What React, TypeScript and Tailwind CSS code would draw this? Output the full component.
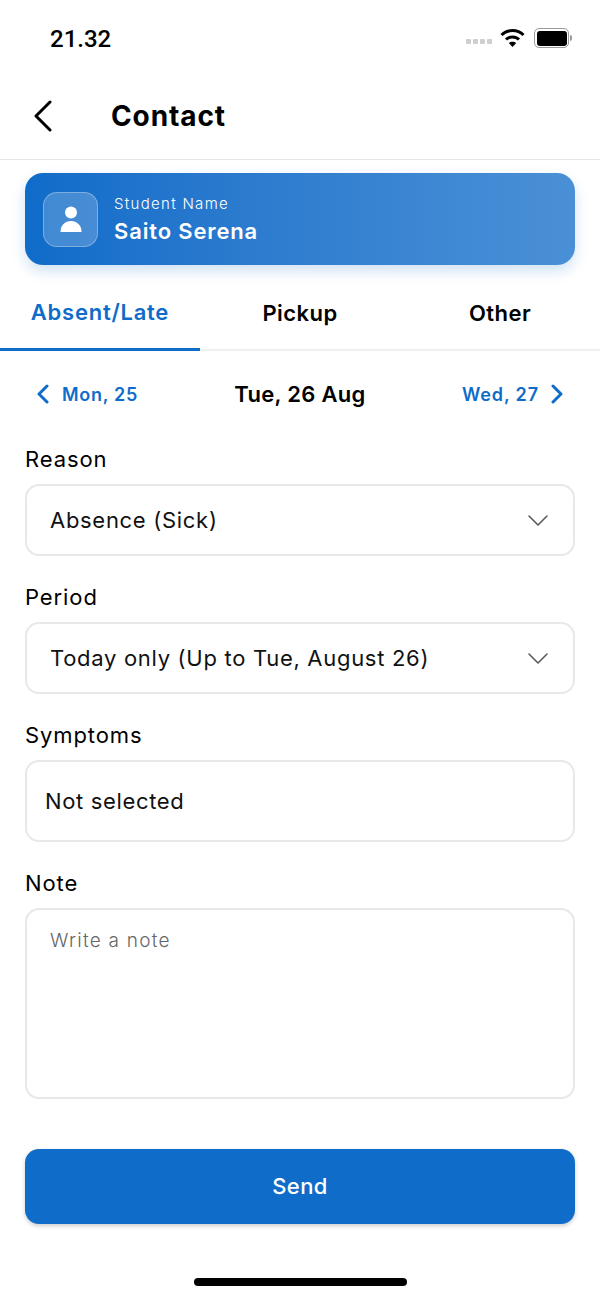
const tabs = ['Absent/Late', 'Pickup', 'Other']

function Field({ label, className, children }: { label: string; className: string; children: React.ReactNode }) {
  return (
    <div className={className}>
      <div className="h-[25px] text-[22px] leading-[25px] tracking-[0.9px] text-black">{label}</div>
      {children}
    </div>
  )
}

function Caret() {
  return (
    <svg width="22" height="14" viewBox="0 0 22 14" fill="none" stroke="#555" strokeWidth="1.5" strokeLinecap="round" strokeLinejoin="round">
      <path d="M2 3 L11 12 L20 3" />
    </svg>
  )
}

function Chevron({ dir }: { dir: 'left' | 'right' }) {
  return (
    <svg width="14" height="20" viewBox="0 0 14 20" fill="none" stroke="#0f6cc9" strokeWidth="3" strokeLinecap="round" strokeLinejoin="round">
      <path d={dir === 'left' ? 'M11 2 L3 10 L11 18' : 'M3 2 L11 10 L3 18'} />
    </svg>
  )
}

function SelectBox({ value }: { value: string }) {
  return (
    <div className="mt-[12px] flex h-[72px] items-center justify-between rounded-[14px] border-2 border-[#e8e8e8] pl-[23px] pr-[24px]">
      <span className="text-[22px] tracking-[0.7px] text-[#111]">{value}</span>
      <Caret />
    </div>
  )
}

export default function App() {
  return (
    <div className="flex h-[1300px] w-[600px] flex-col overflow-hidden bg-white font-['Inter',sans-serif] text-black">
      {/* Status bar */}
      <div className="flex h-[76px] items-start justify-between pl-[50px] pr-[28px] pt-[24px]">
        <span className="font-['Roboto',sans-serif] text-[24px] font-medium leading-[30px]">21.32</span>
        <div className="flex items-center gap-[8px] pt-[4px]">
          <div className="mt-[6px] flex gap-[2px]">
            <span className="h-[5px] w-[5px] rounded-[1px] bg-[#cfcfcf]" />
            <span className="h-[5px] w-[5px] rounded-[1px] bg-[#cfcfcf]" />
            <span className="h-[5px] w-[5px] rounded-[1px] bg-[#cfcfcf]" />
            <span className="h-[5px] w-[5px] rounded-[1px] bg-[#cfcfcf]" />
          </div>
          <svg width="25" height="20" viewBox="0 0 25 20" fill="none" stroke="black" strokeWidth="3">
            <path d="M1.5 7 C7.5 1 17.5 1 23.5 7" />
            <path d="M6 11.5 C9.5 8 15.5 8 19 11.5" />
            <path d="M12.5 19 L8.8 15 C10.8 13.3 14.2 13.3 16.2 15 Z" fill="black" stroke="none" />
          </svg>
          <div className="ml-[1px] flex items-center">
            <div className="flex h-[20px] w-[35px] items-center justify-center rounded-[5px] border border-[#9a9a9a]">
              <div className="h-[15px] w-[30px] rounded-[3px] bg-black" />
            </div>
            <div className="ml-[1px] h-[6px] w-[2px] rounded-r-sm bg-[#9a9a9a]" />
          </div>
        </div>
      </div>

      {/* Header */}
      <div className="flex h-[84px] items-center border-b border-[#e6e6e6] pb-[3px]">
        <svg width="20" height="32" viewBox="0 0 20 32" fill="none" stroke="black" strokeWidth="3" strokeLinecap="round" strokeLinejoin="round" className="ml-[33px]">
          <path d="M17 2 L3 16 L17 30" />
        </svg>
        <span className="ml-[58px] text-[28px] font-bold tracking-[0.9px]">Contact</span>
      </div>

      {/* Student card */}
      <div className="mx-[25px] mt-[13px] flex h-[92px] items-center rounded-[18px] bg-gradient-to-r from-[#0f6cc9] to-[#4a90d6] pl-[18px] shadow-[0_6px_14px_rgba(15,108,201,0.2)]">
        <div className="flex h-[55px] w-[55px] items-center justify-center rounded-[14px] border border-white/30 bg-white/20">
          <svg width="22" height="27" viewBox="0 0 22 27" fill="white">
            <circle cx="11" cy="6.5" r="6" />
            <path d="M0.5 26 C0.5 19 5 15 11 15 C17 15 21.5 19 21.5 26 Z" />
          </svg>
        </div>
        <div className="ml-[16px]">
          <div className="text-[15px] font-light leading-[20px] tracking-[1.3px] text-white">Student Name</div>
          <div className="mt-[3px] text-[22px] font-semibold leading-[28px] tracking-[0.85px] text-white">Saito Serena</div>
        </div>
      </div>

      {/* Tabs */}
      <div className="flex h-[86px] border-b-2 border-[#f0f0f0]">
        {tabs.map((tab, i) => (
          <div
            key={tab}
            className={
              i === 0
                ? '-mb-[2px] flex w-[200px] items-center justify-center border-b-[3px] border-[#0f6cc9] pt-[11px] text-[22px] font-semibold tracking-[0.75px] text-[#0f6cc9]'
                : 'flex w-[200px] items-center justify-center pt-[12px] text-[22px] font-semibold tracking-[0.45px]'
            }
          >
            {tab}
          </div>
        ))}
      </div>

      {/* Date row */}
      <div className="flex h-[86px] items-center justify-between pl-[36px] pr-[36px]">
        <div className="flex items-center gap-[12px] text-[#0f6cc9]">
          <Chevron dir="left" />
          <span className="text-[18px] font-semibold tracking-[0.7px]">Mon, 25</span>
        </div>
        <span className="text-[22px] font-semibold tracking-[0.3px]">Tue, 26 Aug</span>
        <div className="flex items-center gap-[11px] text-[#0f6cc9]">
          <span className="text-[18px] font-semibold tracking-[0.9px]">Wed, 27</span>
          <Chevron dir="right" />
        </div>
      </div>

      {/* Form */}
      <div className="px-[25px] pt-[10px]">
        <Field label="Reason" className="">
          <SelectBox value="Absence (Sick)" />
        </Field>
        <Field label="Period" className="mt-[29px]">
          <SelectBox value="Today only (Up to Tue, August 26)" />
        </Field>
        <Field label="Symptoms" className="mt-[29px]">
          <div className="mt-[12px] flex h-[82px] items-center rounded-[14px] border-2 border-[#e8e8e8] pl-[18px]">
            <span className="text-[22px] tracking-[0.65px] text-[#111]">Not selected</span>
          </div>
        </Field>
        <Field label="Note" className="mt-[29px]">
          <div className="mt-[12px] h-[191px] rounded-[14px] border-2 border-[#e8e8e8] pl-[23px] pt-[17px]">
            <span className="text-[19px] font-light tracking-[1.25px] text-[#666]">Write a note</span>
          </div>
        </Field>

        <button className="mt-[50px] flex h-[75px] w-full items-center justify-center rounded-[14px] bg-[#0f6cc9] text-[22px] font-medium tracking-[0.4px] text-white shadow-[0_2px_4px_rgba(0,0,0,0.2)]">
          Send
        </button>
      </div>

      {/* Home indicator */}
      <div className="mx-auto mt-[54px] h-[8px] w-[213px] rounded-full bg-black" />
    </div>
  )
}
